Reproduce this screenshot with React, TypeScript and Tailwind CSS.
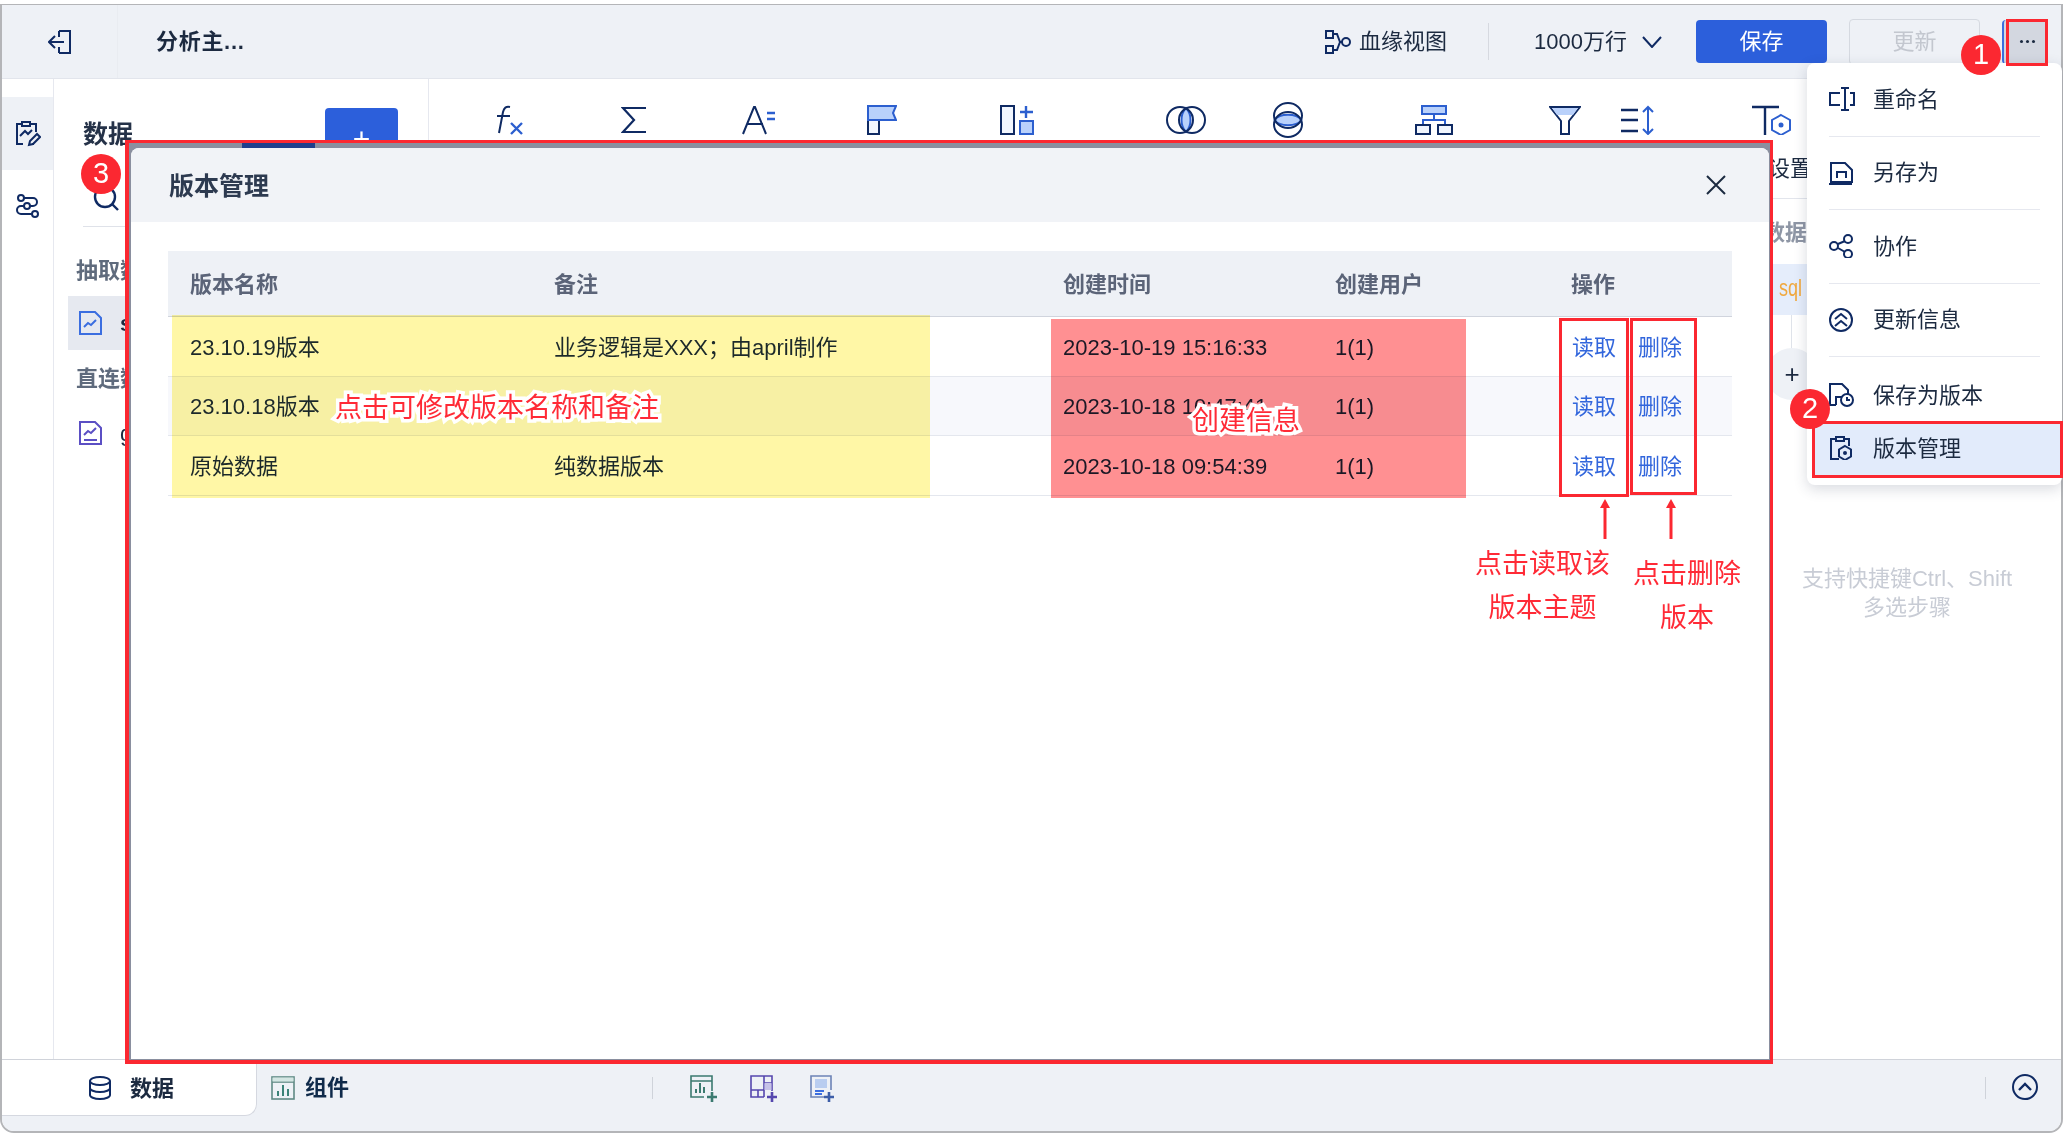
import React from "react";

const navy = "#0f2a63";
const blue = "#2c5fcf";
const light = "#b9d1fb";

const rows = [
  { name: "23.10.19版本", note: "业务逻辑是XXX；由april制作", time: "2023-10-19 15:16:33", bg: "bg-white" },
  { name: "23.10.18版本", note: "", time: "2023-10-18 10:47:41", bg: "bg-[#f7f8fc]" },
  { name: "原始数据", note: "纯数据版本", time: "2023-10-18 09:54:39", bg: "bg-white" },
];

const Svg = ({ w, h, children }: { w: number; h: number; children: React.ReactNode }) => (
  <svg width={w} height={h} viewBox={`0 0 ${w} ${h}`} fill="none" stroke={navy} strokeWidth="2" className="shrink-0">
    {children}
  </svg>
);

const toolbar = [
  {
    w: 31, h: 30, ml: "ml-[64px]",
    el: (
      <>
        <path d="M17 2c-4-1-6 1-7 5L6 28" strokeWidth="2" />
        <path d="M4 11h13" strokeWidth="2" />
        <path d="M18 18l11 11M29 18L18 29" stroke={blue} strokeWidth="2.4" />
      </>
    ),
  },
  {
    w: 26, h: 30, ml: "ml-[97px]",
    el: <path d="M25 3H2l11 12L2 27h23" strokeWidth="2.2" />,
  },
  {
    w: 34, h: 30, ml: "ml-[95px]",
    el: (
      <>
        <path d="M1 29L12 2h1l11 27M5 19h16" strokeWidth="2" />
        <path d="M25 8h8M25 14h8" stroke={blue} strokeWidth="2.4" />
      </>
    ),
  },
  {
    w: 30, h: 30, ml: "ml-[91px]",
    el: (
      <>
        <path d="M1 15h11v14H1z" fill="#f1f6fe" />
        <path d="M1 1h28l-3 7 3 7H1z" fill={light} stroke={blue} />
      </>
    ),
  },
  {
    w: 34, h: 30, ml: "ml-[103px]",
    el: (
      <>
        <rect x="1" y="1" width="13" height="28" fill="#f1f6fe" />
        <path d="M26 1v12M20 7h13" stroke={blue} strokeWidth="2.4" />
        <rect x="20" y="16" width="13" height="13" fill={light} stroke={blue} />
      </>
    ),
  },
  {
    w: 40, h: 30, ml: "ml-[132px]",
    el: (
      <>
        <path d="M20 3c-6 6-6 18 0 24 6-6 6-18 0-24z" fill={light} stroke={blue} />
        <circle cx="14" cy="15" r="13" />
        <circle cx="26" cy="15" r="13" />
      </>
    ),
  },
  {
    w: 30, h: 36, ml: "ml-[67px]",
    el: (
      <>
        <path d="M1.500 18c5-7 22-7 27 0-5 7-22 7-27 0z" fill={light} stroke={blue} />
        <ellipse cx="15" cy="13.500" rx="14" ry="12.500" />
        <ellipse cx="15" cy="22.500" rx="14" ry="12.500" />
      </>
    ),
  },
  {
    w: 38, h: 30, ml: "ml-[112px]",
    el: (
      <>
        <rect x="7" y="1" width="24" height="8" fill={light} stroke={blue} />
        <path d="M19 9v6M8 19v-4h22v4" stroke={blue} />
        <rect x="1" y="20" width="14" height="9" fill="#f1f6fe" />
        <rect x="23" y="20" width="14" height="9" fill="#f1f6fe" />
      </>
    ),
  },
  {
    w: 32, h: 30, ml: "ml-[96px]",
    el: (
      <>
        <path d="M1 2h30L20 16v13h-8V16z" fill="#fff" />
        <path d="M3 3h26l-5 7H8z" fill={light} stroke="none" />
      </>
    ),
  },
  {
    w: 35, h: 30, ml: "ml-[39px]",
    el: (
      <>
        <path d="M1 5h17M1 15h17M1 26h17" strokeWidth="2.6" />
        <path d="M28 3v25M23 7l5-5 5 5M23 24l5 5 5-5" stroke={blue} />
      </>
    ),
  },
  {
    w: 40, h: 30, ml: "ml-[97px]",
    el: (
      <>
        <path d="M0 2h27M13 2v28" strokeWidth="2.4" />
        <path d="M29 10l9 5v10l-9 5-9-5V15z" stroke={blue} />
        <circle cx="29" cy="20" r="2.5" fill={blue} stroke="none" />
      </>
    ),
  },
];

const menu = [
  {
    label: "重命名",
    icon: (
      <>
        <path d="M11 6H1v12h10M21 6h4v12h-4" />
        <path d="M16 0v24M12 1h8M12 23h8" />
      </>
    ),
  },
  {
    label: "另存为",
    icon: (
      <>
        <path d="M2 21V2h14l7 7v12z" />
        <path d="M8 17v-6h9v6M0 23h23" />
      </>
    ),
  },
  {
    label: "协作",
    icon: (
      <>
        <circle cx="5" cy="12" r="4" />
        <circle cx="19" cy="5" r="4" />
        <circle cx="19" cy="20" r="4" />
        <path d="M9 10l7-3M9 14l7 4" />
      </>
    ),
  },
  {
    label: "更新信息",
    icon: (
      <>
        <circle cx="12" cy="12" r="11" />
        <path d="M6 11l6-5 6 5M6 18l6-5 6 5" />
      </>
    ),
  },
];

const Note = ({ className, children }: { className: string; children: React.ReactNode }) => (
  <div className={`absolute whitespace-nowrap text-center text-[27px] leading-[44px] text-[#ff2a36] ${className}`}>
    {children}
  </div>
);

const Badge = ({ className, n }: { className: string; n: number }) => (
  <div
    className={`absolute flex h-10 w-10 items-center justify-center rounded-full bg-[#fb2831] text-[29px] text-white ${className}`}
  >
    {n}
  </div>
);

const Arrow = ({ className }: { className: string }) => (
  <svg width="12" height="40" viewBox="0 0 12 40" className={`absolute ${className}`}>
    <path d="M6 0l5 9H1z" fill="#fb2831" />
    <path d="M6 8v32" stroke="#fb2831" strokeWidth="3" />
  </svg>
);

const App = () => {
  return (
    <div className="relative h-[1133px] w-[2063px] overflow-hidden bg-white pt-1 font-['Liberation_Sans','Noto_Sans_CJK_SC',sans-serif] text-[22px] text-[#1c2a40]">
      <div className="flex h-[1129px] flex-col overflow-hidden rounded-b-[14px] border-x-2 border-t border-b-2 border-[#b4b5b8] bg-white">
        {/* header */}
        <div className="flex h-[74px] shrink-0 items-center border-b border-[#e2e5ec] bg-[#eef1f6] pr-[15px]">
          <div className="flex h-full w-[116px] items-center justify-center border-r border-[#e9ecf1]">
            <Svg w={24} h={24}>
              <path d="M11 1h11v22H11M11 7V1M11 23v-6M16 12H2M7 6l-6 6 6 6" />
            </Svg>
          </div>
          <div className="ml-[38px] font-bold tracking-[0.7px]">分析主...</div>
          <div className="ml-auto flex items-center">
            <Svg w={26} h={24}>
              <rect x="1" y="1" width="7" height="7" />
              <rect x="1" y="16" width="7" height="7" />
              <circle cx="21" cy="12" r="4" />
              <path d="M8 4h4l3 8h2M8 20h4l3-8" />
            </Svg>
            <span className="ml-2">血缘视图</span>
            <div className="ml-[41px] h-[37px] w-px bg-[#d6d9e0]" />
            <span className="ml-[45px] w-[108px] whitespace-nowrap">1000万行</span>
            <Svg w={20} h={12}>
              <path d="M1 1l9 10 9-10" />
            </Svg>
            <button className="ml-[34px] h-[43px] w-[131px] rounded bg-[#2c5fdb] text-white">保存</button>
            <button className="ml-[22px] h-[46px] w-[131px] rounded border border-[#d5d9e0] text-[#c3c7cf]">
              更新
            </button>
            <div className="ml-[22px] flex h-[44px] w-[44px] items-center justify-center gap-[3px] rounded-l border-l-2 border-[#3b6ee0] bg-[#d3d7e0] pl-1">
              <span className="h-[3px] w-[3px] rounded-full bg-[#1c2a40]" />
              <span className="h-[3px] w-[3px] rounded-full bg-[#1c2a40]" />
              <span className="h-[3px] w-[3px] rounded-full bg-[#1c2a40]" />
            </div>
          </div>
        </div>

        {/* main */}
        <div className="flex min-h-0 flex-1">
          <div className="flex w-[52px] shrink-0 flex-col items-center border-r border-[#e6e8ef] pt-[18px]">
            <div className="flex h-[73px] w-full items-center justify-center bg-[#eef1f6]">
              <Svg w={26} h={26}>
                <path d="M19 23h-2M8 23H2V3h4M16 3h5v8" />
                <path d="M7 1h8v4H7z" />
                <path d="M5 15l5-5 3 3 4-4" stroke={navy} />
                <path d="M14 24l1-4 7-7 3 3-7 7z" />
              </Svg>
            </div>
            <div className="mt-[24px]">
              <Svg w={24} h={24}>
                <circle cx="5" cy="4" r="3" />
                <circle cx="11" cy="12" r="3" />
                <circle cx="19" cy="20" r="3" />
                <path d="M8 4h9a4 4 0 010 8h-3M8 12H5a4 4 0 000 8h11" />
              </Svg>
            </div>
          </div>

          <div className="w-[375px] shrink-0 overflow-hidden border-r border-[#e6e8ef] pl-[14px] pt-[29px]">
            <div className="flex items-start">
              <div className="ml-[15px] mt-[11px] text-[25px] font-bold leading-[30px] text-[#253248]">数据</div>
              <div className="ml-[192px] flex h-[60px] w-[73px] items-center justify-center rounded-t bg-[#2c5fdb] text-[30px] text-white">
                +
              </div>
            </div>
            <div className="ml-[25px] mt-[17px]">
              <Svg w={26} h={26}>
                <circle cx="12" cy="12" r="10" strokeWidth="2.4" />
                <path d="M19 19l6 6" strokeWidth="2.4" />
              </Svg>
            </div>
            <div className="ml-[15px] mt-[15px] h-px w-[300px] bg-[#dfe2e9]" />
            <div className="ml-[8px] mt-[29px] font-bold leading-[30px] text-[#5f6b7d]">抽取数据</div>
            <div className="mt-[10px] flex h-[54px] items-center gap-[18px] bg-[#e6e9f0] pl-[11px] font-bold">
              <Svg w={23} h={24}>
                <path d="M1 1h15l6 6v16H1z" stroke="#3b6ee0" />
                <path d="M5 16l4-4 3 2 5-5" stroke="#3b6ee0" />
              </Svg>
              sales
            </div>
            <div className="ml-[8px] mt-[14px] font-bold leading-[30px] text-[#5f6b7d]">直连数据</div>
            <div className="mt-[24px] flex h-[30px] items-center gap-[18px] pl-[11px]">
              <Svg w={23} h={24}>
                <path d="M1 1h15l6 6v16H1z" stroke="#5b4fc4" />
                <path d="M5 14l4-4 3 2 5-5M5 19h13" stroke="#5b4fc4" />
              </Svg>
              g
            </div>
          </div>

          <div className="flex min-w-0 flex-1 flex-col">
            <div className="flex h-[71px] shrink-0 items-center overflow-visible pt-[11px]">
              {toolbar.map((item, i) => (
                <div className={`shrink-0 ${item.ml}`} key={i}>
                  <Svg w={item.w} h={item.h}>
                    {item.el}
                  </Svg>
                </div>
              ))}
            </div>
            <div className="flex flex-1 justify-end">
              <div className="w-[361px]">
                <div className="h-[49px] border-b border-[#e2e5ec] pl-[68px] pt-[4px] leading-[30px]">设置</div>
                <div className="pl-[63px] pt-[19px] font-bold leading-[30px] text-[#8e96a5]">数据</div>
                <div className="mt-[16px] flex h-[51px] items-center bg-[#e5edfb] pb-[3px] pl-[79px] text-[24px] text-[#f0a83e]">
                  <span className="inline-block origin-left scale-x-75">sql</span>
                </div>
                <div className="ml-[91px] h-[33px] w-px bg-[#dfe3ea]" />
                <div className="ml-[66px] flex h-[52px] w-[52px] items-center justify-center rounded-full bg-[#eef1f6] text-[26px]">
                  +
                </div>
                <div className="mt-[164px] pl-[73px] pr-[20px] text-center leading-[29px] text-[#c8ccd5]">
                  支持快捷键Ctrl、Shift
                  <br />
                  多选步骤
                </div>
              </div>
            </div>
          </div>
        </div>

        {/* bottom bar */}
        <div className="flex h-[72px] shrink-0 items-start border-t border-[#d0d3da] bg-[#eef1f6] pr-[23px]">
          <div className="flex h-[56px] w-[255px] items-center gap-[18px] rounded-br-[12px] border-r border-b border-[#d5d8e0] bg-white pl-[86px] pt-[1px] font-bold">
            <Svg w={24} h={24}>
              <ellipse cx="12" cy="5" rx="10" ry="4" />
              <path d="M2 5v14c0 2 4 4 10 4s10-2 10-4V5M2 12c0 2 4 4 10 4s10-2 10-4" />
            </Svg>
            数据
          </div>
          <div className="ml-[14px] mt-[11px] flex items-center font-bold text-[#0f2a4a]">
            <svg width="24" height="24" viewBox="0 0 24 24" fill="none" stroke="#5f8a85" strokeWidth="1.6">
              <rect x="1" y="1" width="22" height="22" />
              <path d="M1 6h22" />
              <rect x="1.5" y="1.5" width="21" height="4" fill="#d3e6e3" stroke="none" />
              <path d="M7 20v-5M12 20V9M17 20v-7" stroke="#3b8278" strokeWidth="2" />
            </svg>
            <span className="ml-[10px]">组件</span>
          </div>
          <div className="ml-[303px] mt-[17px] h-[22px] w-px bg-[#cfd3da]" />
          <div className="ml-[37px] mt-[15px] flex gap-[32px]">
            <svg width="28" height="28" viewBox="0 0 28 28" fill="none" stroke="#3b7a70" strokeWidth="1.6">
              <path d="M22 16V1H1v21h13M1 6h21" />
              <path d="M6 18v-4M10 18V8M14 18v-6" strokeWidth="2" />
              <path d="M22 17v10M17 22h10" strokeWidth="2.6" />
            </svg>
            <svg width="28" height="28" viewBox="0 0 28 28" fill="none" stroke="#5547ae" strokeWidth="1.6">
              <path d="M22 16V1H1v21h13" />
              <path d="M1 15h13M14 1v21M14 8h8M8 15v7" />
              <rect x="14.5" y="8" width="7" height="7" fill="#c6c2e8" stroke="none" />
              <path d="M22 17v10M17 22h10" strokeWidth="2.6" />
            </svg>
            <svg width="26" height="28" viewBox="0 0 26 28" fill="none" stroke="#6c83b6" strokeWidth="1.6">
              <path d="M14 22H1V1h20v14" />
              <rect x="5" y="4" width="12" height="9" fill="#b9cdf0" stroke="none" />
              <path d="M5 16h9M5 19h7" stroke="#3b6ee0" strokeWidth="2" />
              <path d="M19 17v10M14 22h10" stroke="#3d5ea8" strokeWidth="2.6" />
            </svg>
          </div>
          <div className="ml-auto mt-[17px] h-[22px] w-px bg-[#cfd3da]" />
          <div className="ml-[26px] mt-[14px]">
            <Svg w={26} h={26}>
              <circle cx="13" cy="13" r="12" />
              <path d="M7 16l6-6 6 6" strokeWidth="2.4" />
            </Svg>
          </div>
        </div>
      </div>

      {/* version dialog */}
      <div className="absolute left-[125px] top-[140px] h-[924px] w-[1648px] border-t-[3px] border-r-[3px] border-b-[4px] border-l-[4px] border-[#fb2831] bg-[#8a8f9f] pt-[5px] pr-px pb-px pl-[2px]">
        <div className="absolute left-[113px] top-0 h-[5px] w-[73px] bg-[#1f3f8c]" />
        <div className="flex h-full flex-col overflow-hidden rounded-t-lg bg-white">
          <div className="flex h-[74px] shrink-0 items-center justify-between bg-[#f1f3f7] pl-[38px] pr-[43px]">
            <span className="pt-[3px] text-[25px] font-bold text-[#2d3a50]">版本管理</span>
            <svg width="20" height="20" viewBox="0 0 20 20" fill="none" stroke="#1c2a40" strokeWidth="2">
              <path d="M1 1l18 18M19 1L1 19" />
            </svg>
          </div>
          <div className="pl-[37px] pr-[37px] pt-[29px]">
            <div className="grid h-[66px] grid-cols-[364px_509px_272px_236px_1fr] items-center border-b border-[#d0d4dd] bg-[#eef1f6] pl-[22px] pt-[2px] font-bold text-[#5b6478]">
              <div>版本名称</div>
              <div>备注</div>
              <div>创建时间</div>
              <div>创建用户</div>
              <div>操作</div>
            </div>
            {rows.map((row) => (
              <div
                className={`grid h-[59.5px] grid-cols-[364px_509px_272px_236px_1fr] items-center border-b border-[#e4e7ee] pl-[22px] pt-[2px] ${row.bg}`}
                key={row.name}
              >
                <div>{row.name}</div>
                <div>{row.note}</div>
                <div>{row.time}</div>
                <div>1(1)</div>
                <div className="flex gap-[22px] pl-[1px] text-[#3266dc]">
                  <span>读取</span>
                  <span>删除</span>
                </div>
              </div>
            ))}
          </div>
        </div>
      </div>

      {/* highlights */}
      <div className="absolute left-[172px] top-[315px] h-[183px] w-[758px] bg-[#fff7a6] mix-blend-multiply" />
      <div className="absolute left-[1051px] top-[319px] h-[179px] w-[415px] bg-[#ff9092] mix-blend-multiply" />

      {/* more menu */}
      <div className="absolute left-[1807px] top-[63px] w-[255px] rounded-lg bg-white pb-[7px] shadow-[0_4px_14px_rgba(40,50,80,0.18)]">
        {menu.map((item) => (
          <div className="mx-[22px] flex h-[73.5px] items-center border-b border-[#e6e8ef]" key={item.label}>
            <div className="w-[44px]">
              <Svg w={26} h={24}>
                {item.icon}
              </Svg>
            </div>
            {item.label}
          </div>
        ))}
        <div className="mx-[22px] flex h-[67px] items-center pt-[9px]">
          <div className="w-[44px]">
            <Svg w={26} h={24}>
              <path d="M1 23V1h12l6 6v4M1 22h6M7 22V14h6" />
              <circle cx="18" cy="17" r="6" />
              <path d="M18 14v3h3" />
            </Svg>
          </div>
          保存为版本
        </div>
        <div className="ml-[5px] flex h-[54px] items-center bg-[#e2ebfb] pb-[6px] pl-[17px]">
          <div className="w-[44px]">
            <Svg w={26} h={24}>
              <path d="M7 3H2v20h8M15 3h5v7" />
              <path d="M7 1h8v4H7z" />
              <path d="M16 10l6 3.5v7L16 24l-6-3.500v-7z" />
              <circle cx="16" cy="17" r="2" fill={navy} stroke="none" />
            </Svg>
          </div>
          版本管理
        </div>
      </div>

      {/* annotations */}
      <div className="absolute left-[2006px] top-[19px] h-[47px] w-[42px] border-[3px] border-[#fb2831]" />
      <div className="absolute left-[1812px] top-[421px] h-[57px] w-[251px] border-[3px] border-[#fb2831]" />
      <div className="absolute left-[1559px] top-[318px] h-[179px] w-[70px] border-[3px] border-[#fb2831]" />
      <div className="absolute left-[1630px] top-[318px] h-[177px] w-[67px] border-[3px] border-[#fb2831]" />
      <Arrow className="left-[1599px] top-[499px]" />
      <Arrow className="left-[1665px] top-[499px]" />
      <Note className="left-[1475px] top-[542px]">
        点击读取该
        <br />
        版本主题
      </Note>
      <Note className="left-[1633px] top-[552px]">
        点击删除
        <br />
        版本
      </Note>
      <Note className="left-[335px] top-[386px] [-webkit-text-stroke:7px_white] [paint-order:stroke_fill]">
        点击可修改版本名称和备注
      </Note>
      <Note className="left-[1192px] top-[399px] [-webkit-text-stroke:7px_white] [paint-order:stroke_fill]">
        创建信息
      </Note>
      <Badge className="left-[1961px] top-[35px]" n={1} />
      <Badge className="left-[1790px] top-[389px]" n={2} />
      <Badge className="left-[81px] top-[154px]" n={3} />
    </div>
  );
};

export default App;
